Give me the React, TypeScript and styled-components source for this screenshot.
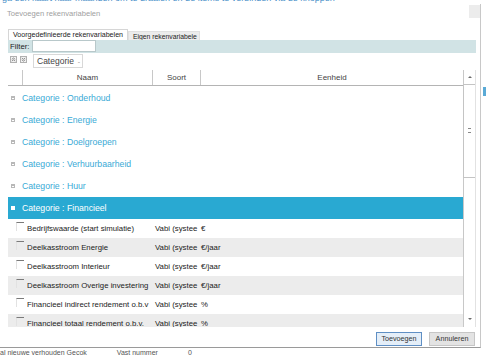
import React from 'react';
import styled, { createGlobalStyle } from 'styled-components';

const GlobalStyle = createGlobalStyle`
  html, body {
    margin: 0;
    padding: 0;
    background: #ffffff;
    font-family: "Liberation Sans", Arial, sans-serif;
    overflow: hidden;
  }
`;

const groups = ['Onderhoud', 'Energie', 'Doelgroepen', 'Verhuurbaarheid', 'Huur'];

const items = [
  { naam: 'Bedrijfswaarde (start simulatie)', soort: 'Vabi (systee', eenheid: '€' },
  { naam: 'Deelkasstroom Energie', soort: 'Vabi (systee', eenheid: '€/jaar' },
  { naam: 'Deelkasstroom Interieur', soort: 'Vabi (systee', eenheid: '€/jaar' },
  { naam: 'Deelkasstroom Overige investering', soort: 'Vabi (systee', eenheid: '€/jaar' },
  { naam: 'Financieel indirect rendement o.b.v', soort: 'Vabi (systee', eenheid: '%' },
  { naam: 'Financieel totaal rendement o.b.v.', soort: 'Vabi (systee', eenheid: '%' },
];

const Screen = styled.div`
  width: 486px;
  height: 357px;
  display: flex;
  flex-direction: column;
  overflow: hidden;
`;

const PeekTop = styled.div`
  height: 4px;
  overflow: hidden;
  color: #4a90c8;
  font-size: 9px;
  line-height: 9px;
  white-space: nowrap;
  span { display: block; margin-top: -6px; padding-left: 2px; }
`;

const Middle = styled.div`
  display: flex;
  height: 345px;
`;

const Dialog = styled.div`
  width: 481px;
  box-sizing: border-box;
  border-right: 1px solid #c8c8c8;
  border-bottom: 1px solid #9a9a9a;
  display: flex;
  flex-direction: column;
  background: #fff;
`;

const PeekRight = styled.div`
  flex: 1;
  display: flex;
  flex-direction: column;
  padding-top: 83px;
  padding-left: 2px;
  &::before {
    content: "";
    display: block;
    height: 9px;
    background: #5aaad6;
  }
`;

const TitleBar = styled.div`
  height: 20px;
  display: flex;
  align-items: center;
  justify-content: space-between;
  padding-left: 7px;
`;

const Title = styled.div`
  font-size: 7.6px;
  color: #a0a0a0;
`;

const CloseBtn = styled.div`
  width: 11px;
  height: 13px;
  background: #ececec;
  align-self: flex-start;
  margin-top: 1px;
`;

const Content = styled.div`
  flex: 1;
  display: flex;
  flex-direction: column;
  padding: 5px 4px 0 8px;
`;

const Tabs = styled.div`
  display: flex;
  align-items: flex-end;
  height: 11px;
`;

const Tab = styled.div<{ $active?: boolean }>`
  height: ${(p) => (p.$active ? '11px' : '9px')};
  box-sizing: border-box;
  padding: 0 3px 0 4px;
  font-size: ${(p) => (p.$active ? '7.1px' : '6.8px')};
  line-height: ${(p) => (p.$active ? '11px' : '9px')};
  color: #222;
  background: ${(p) => (p.$active ? '#fff' : '#ececec')};
  border: 1px solid ${(p) => (p.$active ? '#d6d6d6' : '#e0e0e0')};
  border-bottom: none;
  white-space: nowrap;
  width: ${(p) => (p.$active ? '120px' : '72px')};
`;

const FilterBar = styled.div`
  height: 13px;
  background: #d1e3e5;
  display: flex;
  align-items: center;
  padding-left: 2px;
  gap: 2px;
`;

const FilterLabel = styled.span`
  font-size: 7.8px;
  color: #222;
`;

const FilterInput = styled.div`
  width: 64px;
  height: 12px;
  box-sizing: border-box;
  background: #fff;
  border: 1px solid #b8c8ca;
`;

const Toolbar = styled.div`
  height: 17px;
  display: flex;
  align-items: center;
  padding-left: 2px;
  gap: 3px;
`;

const IconBox = styled.svg`
  width: 7px;
  height: 7px;
  display: block;
  margin-bottom: 4px;
`;

const GroupChip = styled.div`
  margin-left: 3px;
  height: 14px;
  width: 50px;
  box-sizing: border-box;
  border: 1px solid #d8d8d8;
  display: flex;
  align-items: center;
  justify-content: space-between;
  padding: 0 2px 0 3px;
  font-size: 8.5px;
  color: #444;
  span { color: #999; font-size: 7px; }
`;

const Grid = styled.div`
  height: 257px;
  display: flex;
`;

const GridMain = styled.div`
  flex: 1;
  display: flex;
  flex-direction: column;
  overflow: hidden;
`;

const HeaderRow = styled.div`
  height: 15px;
  display: flex;
  border-bottom: 1px solid #b4b4b4;
  flex-shrink: 0;
`;

const HeaderCell = styled.div<{ $w?: number }>`
  ${(p) => (p.$w ? `width: ${p.$w}px;` : 'flex: 1;')}
  box-sizing: border-box;
  border-right: 1px solid #c8c8c8;
  font-size: 8px;
  line-height: 15px;
  text-align: center;
  color: #444;
  &:last-child { border-right: none; }
`;

const Rows = styled.div`
  padding-top: 1px;
  display: flex;
  flex-direction: column;
`;

const GroupRow = styled.div<{ $selected?: boolean }>`
  height: 22px;
  flex-shrink: 0;
  display: flex;
  align-items: center;
  background: ${(p) => (p.$selected ? '#29a9d2' : 'transparent')};
  color: ${(p) => (p.$selected ? '#ffffff' : '#3aaad6')};
  font-size: 8.7px;
  padding-left: 3px;
`;

const Expander = styled.div<{ $open?: boolean }>`
  width: 4px;
  height: 4px;
  box-sizing: border-box;
  margin-right: 7px;
  ${(p) =>
    p.$open
      ? 'background: #ffffff;'
      : 'border: 1px solid #b8b8b8; background: linear-gradient(#b8b8b8,#b8b8b8) center/2px 1px no-repeat;'}
`;

const DataRow = styled.div<{ $alt?: boolean }>`
  height: 19px;
  flex-shrink: 0;
  display: flex;
  align-items: center;
  background: ${(p) => (p.$alt ? '#ececec' : '#ffffff')};
  font-size: 7.8px;
  color: #222;
`;

const CheckCell = styled.div`
  width: 17px;
  display: flex;
  justify-content: flex-end;
  padding-right: 1px;
  box-sizing: border-box;
`;

const Checkbox = styled.div`
  width: 8px;
  height: 9px;
  box-sizing: border-box;
  border-top: 1px solid #7a7a7a;
  border-left: 1px solid #e2e2e2;
  margin-bottom: 3px;
`;

const Cell = styled.div<{ $w?: number }>`
  ${(p) => (p.$w ? `width: ${p.$w}px;` : 'flex: 1;')}
  padding-left: 2px;
  box-sizing: border-box;
  white-space: nowrap;
  overflow: hidden;
`;

const Scrollbar = styled.div`
  width: 11px;
  border-left: 1px solid #c8c8c8;
  border-right: 1px solid #e2e2e2;
  display: flex;
  flex-direction: column;
  background: #fff;
`;

const ScrollArrow = styled.div<{ $down?: boolean }>`
  height: 14px;
  display: flex;
  align-items: ${(p) => (p.$down ? 'flex-end' : 'center')};
  justify-content: center;
  padding-bottom: ${(p) => (p.$down ? '7px' : '0')};
  box-sizing: border-box;
  &::after {
    content: "";
    border-left: 2px solid transparent;
    border-right: 2px solid transparent;
    ${(p) => (p.$down ? 'border-top: 2px solid #6a6a6a;' : 'border-bottom: 2px solid #6a6a6a;')}
  }
`;

const ScrollThumb = styled.div`
  height: 92px;
  margin-left: -1px;
  border: 1px solid #c4c4c4;
  border-right: none;
  display: flex;
  align-items: center;
  justify-content: center;
  &::after {
    content: "";
    width: 3px;
    height: 3px;
    border-top: 1px solid #888;
    border-bottom: 1px solid #888;
  }
`;

const ScrollTrack = styled.div`
  flex: 1;
`;

const Footer = styled.div`
  display: flex;
  justify-content: flex-end;
  gap: 7px;
  padding: 5px 1px 0 0;
`;

const Button = styled.div<{ $primary?: boolean }>`
  width: 46px;
  height: 14px;
  box-sizing: border-box;
  border: 1px solid ${(p) => (p.$primary ? '#5f8fc4' : '#c6c6c6')};
  background: ${(p) => (p.$primary ? '#e4eef8' : '#e3e3e3')};
  font-size: 7.2px;
  line-height: 12px;
  text-align: center;
  color: #333;
`;

const PeekBottom = styled.div`
  height: 8px;
  overflow: hidden;
  font-size: 7px;
  line-height: 8px;
  color: #555;
  white-space: nowrap;
  padding-top: 1px;
  span { margin-right: 30px; }
`;

const SortIcon = ({ down }: { down?: boolean }) => (
  <IconBox viewBox="0 0 7 7">
    <rect x="0.5" y="0.5" width="6" height="6" fill="#f2f2f2" stroke="#b0b0b0" strokeWidth="1" />
    {down ? (
      <path d="M1.8 2 L3.5 3.3 L5.2 2 M1.8 3.8 L3.5 5.1 L5.2 3.8" fill="none" stroke="#777" strokeWidth="0.8" />
    ) : (
      <path d="M1.8 3.3 L3.5 2 L5.2 3.3 M1.8 5.1 L3.5 3.8 L5.2 5.1" fill="none" stroke="#777" strokeWidth="0.8" />
    )}
  </IconBox>
);

export default function App() {
  return (
    <Screen>
      <GlobalStyle />
      <PeekTop>
        <span>ga een kaart naar maanden om te draaien en de items te verbinden via de knoppen</span>
      </PeekTop>
      <Middle>
        <Dialog>
          <TitleBar>
            <Title>Toevoegen rekenvariabelen</Title>
            <CloseBtn />
          </TitleBar>
          <Content>
            <Tabs>
              <Tab $active>Voorgedefinieerde rekenvariabelen</Tab>
              <Tab>Eigen rekenvariabele</Tab>
            </Tabs>
            <FilterBar>
              <FilterLabel>Filter:</FilterLabel>
              <FilterInput />
            </FilterBar>
            <Toolbar>
              <SortIcon />
              <SortIcon down />
              <GroupChip>
                Categorie <span>-</span>
              </GroupChip>
            </Toolbar>
            <Grid>
              <GridMain>
                <HeaderRow>
                  <HeaderCell $w={15} />
                  <HeaderCell $w={130}>Naam</HeaderCell>
                  <HeaderCell $w={48}>Soort</HeaderCell>
                  <HeaderCell>Eenheid</HeaderCell>
                </HeaderRow>
                <Rows>
                  {groups.map((g) => (
                    <GroupRow key={g}>
                      <Expander />
                      Categorie : {g}
                    </GroupRow>
                  ))}
                  <GroupRow $selected>
                    <Expander $open />
                    Categorie : Financieel
                  </GroupRow>
                  {items.map((it, i) => (
                    <DataRow key={it.naam} $alt={i % 2 === 1}>
                      <CheckCell>
                        <Checkbox />
                      </CheckCell>
                      <Cell $w={128}>{it.naam}</Cell>
                      <Cell $w={46}>{it.soort}</Cell>
                      <Cell>{it.eenheid}</Cell>
                    </DataRow>
                  ))}
                </Rows>
              </GridMain>
              <Scrollbar>
                <ScrollArrow />
                <ScrollThumb />
                <ScrollTrack />
                <ScrollArrow $down />
              </Scrollbar>
            </Grid>
            <Footer>
              <Button $primary>Toevoegen</Button>
              <Button>Annuleren</Button>
            </Footer>
          </Content>
        </Dialog>
        <PeekRight />
      </Middle>
      <PeekBottom>
        <span>al nieuwe verhouden Gecok</span>
        <span>Vast nummer</span>
        <span>0</span>
      </PeekBottom>
    </Screen>
  );
}
